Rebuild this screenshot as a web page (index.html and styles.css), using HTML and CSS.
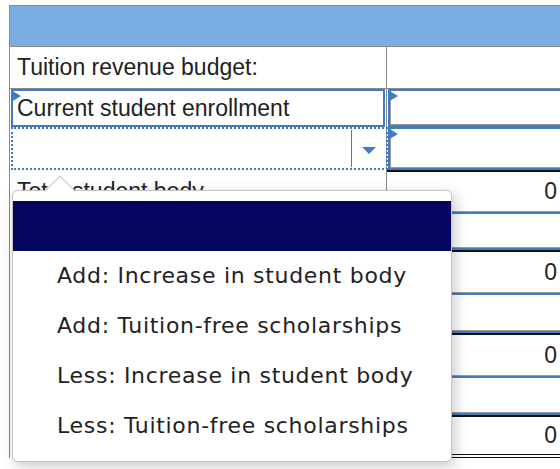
FILE: index.html
```html
<!DOCTYPE html>
<html lang="en">
<head>
    <meta charset="UTF-8">
    <meta name="viewport" content="width=device-width, initial-scale=1.0">
    <title>Tuition revenue budget</title>
    <link rel="stylesheet" href="styles.css">
</head>
<body>
    <div class="sheet">
        <!-- Title bar -->
        <div class="head"></div>

        <div class="row r1">
            <div class="label">Tuition revenue budget:</div>
            <div class="value"></div>
        </div>

        <div class="row r2">
            <div class="label">
                <div class="entry">Current student enrollment<span class="flag"></span></div>
            </div>
            <div class="value"><div class="entry"><span class="flag"></span></div></div>
        </div>

        <div class="row r3">
            <div class="label">
                <div class="picker">
                    <span class="picker-btn"><span class="caret"></span></span>
                </div>
            </div>
            <div class="value"><div class="entry"><span class="flag"></span></div></div>
        </div>

        <div class="row r4">
            <div class="label">Total student body</div>
            <div class="value amount">0</div>
        </div>

        <div class="row r5">
            <div class="label"></div>
            <div class="value"><div class="entry"><span class="flag"></span></div></div>
        </div>

        <div class="row r6">
            <div class="label"></div>
            <div class="value amount">0</div>
        </div>

        <div class="row r7">
            <div class="label"></div>
            <div class="value"><div class="entry"><span class="flag"></span></div></div>
        </div>

        <div class="row r8">
            <div class="label"></div>
            <div class="value amount">0</div>
        </div>

        <div class="row r9">
            <div class="label"></div>
            <div class="value"><div class="entry"><span class="flag"></span></div></div>
        </div>

        <div class="row r10">
            <div class="label"></div>
            <div class="value amount final">0</div>
        </div>
    </div>

    <!-- Open dropdown list -->
    <div class="menu">
        <div class="opt active"></div>
        <div class="opt">Add: Increase in student body</div>
        <div class="opt">Add: Tuition-free scholarships</div>
        <div class="opt">Less: Increase in student body</div>
        <div class="opt">Less: Tuition-free scholarships</div>
    </div>
</body>
</html>
```

FILE: styles.css
```css
* {
    box-sizing: border-box;
}
body {
    margin: 0;
    overflow: hidden;
    font-family: "Liberation Sans", Arial, sans-serif;
    font-size: 23px;
    color: #222;
    background-color: #fff;
}
.sheet {
    width: 560px;
    margin: 5px 0 0 9px;
    border-top: 1px solid #8a8a8a;
    border-left: 1px solid #8a8a8a;
}
.head {
    height: 41px;
    background-color: #7aade1;
    border-bottom: 1px solid #8a8a8a;
}
.row {
    display: grid;
    grid-template-columns: 377px 1fr;
}
.label {
    display: flex;
    align-items: center;
    padding-left: 7px;
    border-right: 1px solid #8a8a8a;
}
.value {
    display: flex;
    align-items: center;
    justify-content: flex-end;
    padding-right: 12px;
}
.r1 { height: 42px; border-bottom: 1px solid #8a8a8a; }
.r2 { height: 38px; }
.r3 { height: 43px; }
.r4 { height: 42px; }
.r5 { height: 38px; }
.r6 { height: 43px; }
.r7 { height: 40px; }
.r8 { height: 43px; }
.r9 { height: 39px; }
.r10 { height: 43px; }

/* input cells */
.r2 .label, .r3 .label {
    padding-left: 1px;
    align-items: stretch;
}
.r2 .value, .r3 .value, .r5 .value, .r7 .value, .r9 .value {
    padding: 0 0 0 1px;
    align-items: stretch;
}
.entry {
    position: relative;
    flex: 1;
    display: flex;
    align-items: center;
    padding-left: 4px;
    border: 2px solid #3f7cc3;
    box-shadow: inset 1px -1px 0 #9a9a9a;
}
.r2 .label .entry {
    margin-right: 1px;
    box-shadow: none;
}
.flag {
    position: absolute;
    left: -2px;
    top: -1px;
    width: 0;
    height: 0;
    border-left: 10px solid #3f7cc3;
    border-top: 6px solid transparent;
    border-bottom: 6px solid transparent;
}

/* dropdown in the label column */
.picker {
    position: relative;
    flex: 1;
    margin-right: -2px;
    border: 2px dotted #3f7cc3;
}
.picker-btn {
    position: absolute;
    top: 1px;
    bottom: 1px;
    right: 0;
    width: 35px;
    display: flex;
    align-items: center;
    justify-content: center;
    padding-top: 3px;
    border-left: 1px solid #3f7cc3;
}
.caret {
    width: 0;
    height: 0;
    border-top: 7px solid #3f7cc3;
    border-left: 7px solid transparent;
    border-right: 7px solid transparent;
}

/* totals */
.amount {
    border-top: 2px solid #111;
    border-bottom: 1px solid #9a9a9a;
}
.amount.final {
    border-bottom: 4px double #111;
}

/* dropdown list */
.menu {
    position: absolute;
    left: 12px;
    top: 190px;
    width: 440px;
    padding: 10px 0;
    border: 1px solid #c6c6c6;
    border-radius: 6px;
    background-color: #fff;
    box-shadow: 3px 4px 14px rgba(0, 0, 0, 0.22);
    font-family: "DejaVu Sans", Verdana, sans-serif;
    font-size: 22px;
    letter-spacing: 0.7px;
}
.menu::before {
    content: "";
    position: absolute;
    left: 36px;
    top: -11px;
    width: 21px;
    height: 21px;
    background-color: #fff;
    border-top: 1px solid #c6c6c6;
    border-left: 1px solid #c6c6c6;
    transform: rotate(45deg);
}
.opt {
    position: relative;
    height: 50px;
    line-height: 50px;
    padding-left: 44px;
    color: #222;
    white-space: nowrap;
}
.opt.active {
    background-color: #050660;
}
```
